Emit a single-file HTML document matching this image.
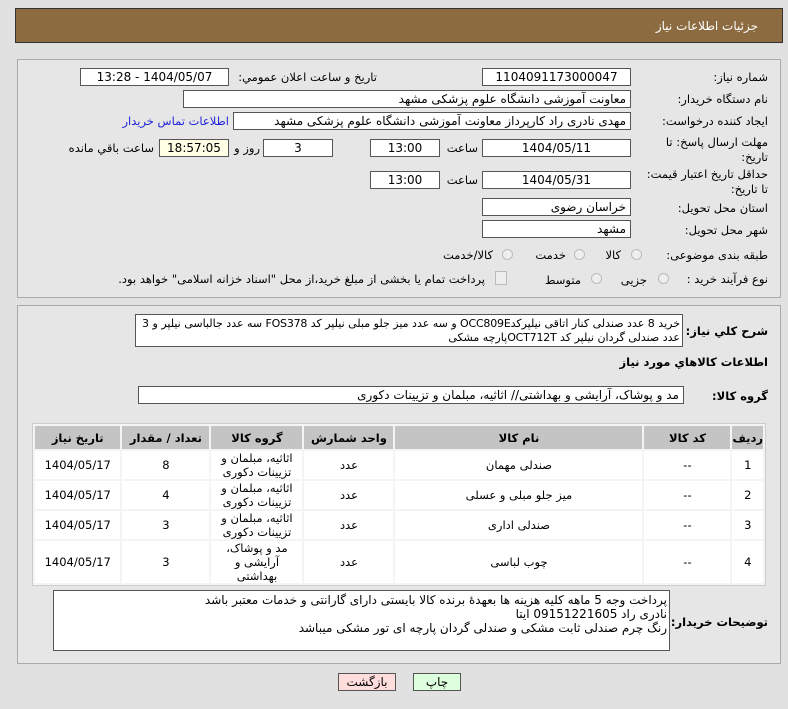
<!DOCTYPE html>
<html dir="rtl"><head><meta charset="utf-8"><style>
body{margin:0;width:788px;height:709px;background:#e1e1e1;font-family:"DejaVu Sans","Liberation Sans",sans-serif;font-size:11.5px;color:#000;position:relative;overflow:hidden}
.a{position:absolute;white-space:nowrap}
.b{position:absolute;background:#fff;border:1px solid #555;box-sizing:border-box;text-align:center;line-height:16px;font-size:12px;white-space:nowrap;overflow:hidden}
.r{text-align:right;padding-right:4px}
.lbl{position:absolute;right:20px;white-space:nowrap}
.rad{position:absolute;width:11px;height:11px;border-radius:50%;border:1px solid #bbb;background:#eee;box-sizing:border-box}
table{position:absolute;left:32px;top:423px;width:734px;border-collapse:separate;border-spacing:2px;background:#f4f4f4;border:1px solid #ccc}
td,th{text-align:center;font-size:11.5px;padding:0}
th{background:#c4c4c4;height:23px;font-weight:bold}
td{background:#fff;height:27px;line-height:14px}
</style></head><body>
<div class="a" style="left:15px;top:8px;width:768px;height:35px;background:#8c6b40;border:1px solid #333;box-sizing:border-box"></div>
<div class="a" style="right:30px;top:19px;color:#fff;font-size:12px">جزئیات اطلاعات نیاز</div>

<div class="a" style="left:17px;top:59px;width:764px;height:239px;background:#e6e6e6;border:1px solid #aaa;box-sizing:border-box"></div>
<div class="lbl" style="top:70px">شماره نیاز:</div>
<div class="b" style="left:482px;top:68px;width:149px;height:18px">1104091173000047</div>
<div class="a" style="right:411px;top:70px">تاريخ و ساعت اعلان عمومي:</div>
<div class="b" style="left:80px;top:68px;width:149px;height:18px">1404/05/07 - 13:28</div>
<div class="lbl" style="top:92px">نام دستگاه خریدار:</div>
<div class="b r" style="left:183px;top:90px;width:448px;height:18px">معاونت آموزشی دانشگاه علوم پزشکی مشهد</div>
<div class="lbl" style="top:114px">ایجاد کننده درخواست:</div>
<div class="b r" style="left:233px;top:112px;width:398px;height:18px">مهدی نادری راد کارپرداز معاونت آموزشی دانشگاه علوم پزشکی مشهد</div>
<div class="a" style="right:559px;top:114px;color:#2222dd">اطلاعات تماس خریدار</div>
<div class="lbl" style="top:135px;line-height:15px;text-align:right">مهلت ارسال پاسخ: تا<br>تاریخ:</div>
<div class="b" style="left:482px;top:139px;width:149px;height:18px">1404/05/11</div>
<div class="a" style="right:310px;top:141px">ساعت</div>
<div class="b" style="left:370px;top:139px;width:70px;height:18px">13:00</div>
<div class="b" style="left:263px;top:139px;width:70px;height:18px">3</div>
<div class="a" style="right:528px;top:141px">روز و</div>
<div class="b" style="left:159px;top:139px;width:70px;height:18px;background:#ffffe6">18:57:05</div>
<div class="a" style="right:634px;top:141px">ساعت باقي مانده</div>
<div class="lbl" style="top:167px;line-height:15px;text-align:right">حداقل تاریخ اعتبار قیمت:<br>تا تاریخ:</div>
<div class="b" style="left:482px;top:171px;width:149px;height:18px">1404/05/31</div>
<div class="a" style="right:310px;top:173px">ساعت</div>
<div class="b" style="left:370px;top:171px;width:70px;height:18px">13:00</div>
<div class="lbl" style="top:201px">استان محل تحویل:</div>
<div class="b r" style="left:482px;top:198px;width:149px;height:18px">خراسان رضوی</div>
<div class="lbl" style="top:223px">شهر محل تحویل:</div>
<div class="b r" style="left:482px;top:220px;width:149px;height:18px">مشهد</div>
<div class="lbl" style="top:248px">طبقه بندی موضوعی:</div>
<div class="rad" style="left:631px;top:249px"></div><div class="a" style="right:167px;top:248px">کالا</div>
<div class="rad" style="left:574px;top:249px"></div><div class="a" style="right:222px;top:248px">خدمت</div>
<div class="rad" style="left:502px;top:249px"></div><div class="a" style="right:295px;top:248px">کالا/خدمت</div>
<div class="lbl" style="top:272px">نوع فرآیند خرید :</div>
<div class="rad" style="left:658px;top:273px"></div><div class="a" style="right:141px;top:273px">جزیی</div>
<div class="rad" style="left:591px;top:273px"></div><div class="a" style="right:207px;top:273px">متوسط</div>
<div class="a" style="left:495px;top:271px;width:10px;height:12px;border:1px solid #bbb;background:#eee"></div>
<div class="a" style="right:303px;top:272px">پرداخت تمام یا بخشی از مبلغ خرید،از محل "اسناد خزانه اسلامی" خواهد بود.</div>

<div class="a" style="left:17px;top:305px;width:764px;height:359px;background:#e6e6e6;border:1px solid #aaa;box-sizing:border-box"></div>
<div class="lbl" style="top:324px;font-weight:bold">شرح کلي نياز:</div>
<div class="b" style="left:135px;top:314px;width:548px;height:33px;text-align:right;line-height:14px;padding:2px 2px;white-space:normal;font-size:11px;letter-spacing:-0.2px">خرید 8 عدد صندلی کنار اتاقی نیلپرکدOCC809E و سه عدد میز جلو مبلی نیلپر کد FOS378 سه عدد جالباسی نیلپر و 3 عدد صندلی گردان نیلپر کد OCT712Tپارچه مشکی</div>
<div class="lbl" style="top:355px;font-weight:bold">اطلاعات کالاهاي مورد نياز</div>
<div class="lbl" style="top:389px;font-weight:bold">گروه کالا:</div>
<div class="b r" style="left:138px;top:386px;width:546px;height:18px">مد و پوشاک، آرایشی و بهداشتی// اثاثیه، مبلمان و تزیینات دکوری</div>
<table>
<tr><th style="width:26px">ردیف</th><th style="width:86px">کد کالا</th><th style="width:247px">نام کالا</th><th style="width:89px">واحد شمارش</th><th style="width:91px">گروه کالا</th><th style="width:87px">تعداد / مقدار</th><th>تاریخ نیاز</th></tr>
<tr><td>1</td><td>--</td><td>صندلی مهمان</td><td>عدد</td><td>اثاثیه، مبلمان و<br>تزیینات دکوری</td><td>8</td><td>1404/05/17</td></tr>
<tr><td>2</td><td>--</td><td>میز جلو مبلی و عسلی</td><td>عدد</td><td>اثاثیه، مبلمان و<br>تزیینات دکوری</td><td>4</td><td>1404/05/17</td></tr>
<tr><td>3</td><td>--</td><td>صندلی اداری</td><td>عدد</td><td>اثاثیه، مبلمان و<br>تزیینات دکوری</td><td>3</td><td>1404/05/17</td></tr>
<tr><td style="height:42px">4</td><td>--</td><td>چوب لباسی</td><td>عدد</td><td>مد و پوشاک،<br>آرایشی و<br>بهداشتی</td><td>3</td><td>1404/05/17</td></tr>
</table>
<div class="lbl" style="top:615px;font-weight:bold">توضیحات خریدار:</div>
<div class="b" style="left:53px;top:590px;width:617px;height:61px;text-align:right;line-height:14px;padding:2px 2px;white-space:normal">پرداخت وجه 5 ماهه کلیه هزینه ها بعهدهٔ برنده کالا بایستی دارای گارانتی و خدمات معتبر باشد<br>نادری راد 09151221605 ایتا<br>رنگ چرم صندلی ثابت مشکی و صندلی گردان پارچه ای تور مشکی میباشد</div>
<div class="b" style="left:338px;top:673px;width:58px;height:18px;background:#fdd">بازگشت</div>
<div class="b" style="left:413px;top:673px;width:48px;height:18px;background:#dfd">چاپ</div>
</body></html>
